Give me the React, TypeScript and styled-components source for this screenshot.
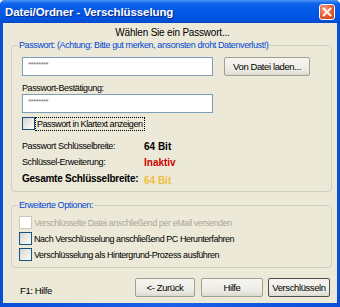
import React from "react";
import styled, { createGlobalStyle } from "styled-components";

const Global = createGlobalStyle`
  html, body { margin: 0; padding: 0; background: #ffffff; }
  body {
    font-family: "Liberation Sans", Arial, sans-serif;
    font-size: 9px;
    letter-spacing: -0.4px;
    color: #000;
  }
  * { box-sizing: border-box; }
`;

const Window = styled.div`
  width: 340px;
  height: 307px;
  display: flex;
  flex-direction: column;
  background: linear-gradient(90deg, #0a4fd9 0%, #1a5fe6 50%, #0a4fd9 100%);
  padding: 0 3px 4px 3px;
  border-radius: 5px 5px 0 0;
  overflow: hidden;
`;

const TitleBar = styled.div`
  height: 23px;
  flex: none;
  margin: 0 -3px;
  padding: 0 5px 0 5px;
  display: flex;
  align-items: center;
  justify-content: space-between;
  background: linear-gradient(180deg, #4a94f8 0%, #0f62ea 16%, #0058e6 50%, #0053df 85%, #0a48c8 100%);
`;

const Title = styled.span`
  color: #ffffff;
  font-weight: bold;
  font-size: 11.5px;
  letter-spacing: -0.1px;
  text-shadow: 1px 1px 0 #0a2a86;
`;

const CloseButton = styled.div`
  width: 16px;
  height: 16px;
  border: 1px solid #ffffff;
  border-radius: 3px;
  background: radial-gradient(circle at 35% 30%, #f2a083 0%, #e05a32 55%, #c43c16 100%);
  display: flex;
  align-items: center;
  justify-content: center;
  margin-top: 1px;
`;

const Body = styled.div`
  flex: 1;
  background: #ece9d8;
  display: flex;
  flex-direction: column;
  padding: 0 5px 0 8px;
`;

const Heading = styled.div`
  text-align: center;
  font-size: 10px;
  letter-spacing: -0.2px;
  height: 12px;
  line-height: 12px;
  margin-top: 4px;
  margin-left: 2px;
`;

const Group = styled.fieldset<{ $gap: number }>`
  margin: ${(p) => p.$gap}px 0 0 0;
  padding: 0 0 5px 10px;
  border: 1px solid #d0d0bf;
  border-radius: 4px;
  display: flex;
  flex-direction: column;
  min-width: 0;
`;

const Legend = styled.legend`
  color: #0046d5;
  padding: 0 1px;
  margin-left: -4px;
  line-height: 12px;
  height: 12px;
`;

const Row = styled.div`
  display: flex;
  align-items: center;
  gap: 11px;
  margin-top: 6px;
`;

const TextBox = styled.div`
  width: 191px;
  height: 19px;
  flex: none;
  border: 1px solid #7f9db9;
  background: #ffffff;
  color: #7a7a7a;
  font-size: 8px;
  line-height: 14px;
  padding-left: 5px;
  letter-spacing: -0.6px;
`;

const Label = styled.div`
  margin-top: 6px;
  height: 12px;
  line-height: 12px;
`;

const Button = styled.div<{ $w: number; $default?: boolean }>`
  width: ${(p) => p.$w}px;
  height: 19px;
  flex: none;
  border: 1px solid ${(p) => (p.$default ? "#4e4e4e" : "#a09f96")};
  border-radius: 2px;
  background: linear-gradient(180deg, #f6f5f0 0%, #ecebe4 70%, #dcdacf 100%);
  display: flex;
  align-items: center;
  justify-content: center;
  color: #000;
  font-size: 9.5px;
`;

const CheckRow = styled.div<{ $disabled?: boolean }>`
  display: flex;
  align-items: center;
  height: 13px;
  white-space: nowrap;
  color: ${(p) => (p.$disabled ? "#aca899" : "#000")};
`;

const Box = styled.span<{ $disabled?: boolean }>`
  width: 13px;
  height: 13px;
  flex: none;
  border: 1px solid ${(p) => (p.$disabled ? "#cac8bb" : "#1c5180")};
  background: ${(p) =>
    p.$disabled ? "#ffffff" : "linear-gradient(135deg, #d6d6d0 0%, #eeede8 60%, #ffffff 100%)"};
`;

const CheckText = styled.span<{ $focus?: boolean }>`
  margin-left: 1px;
  padding: 0 1px;
  line-height: 12px;
  font-size: 9px;
  letter-spacing: -0.45px;
  outline: ${(p) => (p.$focus ? "1px dotted #000" : "none")};
`;

const Stats = styled.div`
  display: grid;
  grid-template-columns: 122px auto;
  grid-auto-rows: 16px;
  align-items: center;
  margin-top: 8px;
  white-space: nowrap;
`;

const StatValue = styled.span<{ $color: string; $drop?: boolean }>`
  font-weight: bold;
  font-size: 10px;
  letter-spacing: 0;
  color: ${(p) => p.$color};
  margin-top: ${(p) => (p.$drop ? 4 : 0)}px;
`;

const BoldLabel = styled.span`
  font-weight: bold;
  font-size: 10px;
  letter-spacing: -0.25px;
`;

const Options = styled.div`
  display: flex;
  flex-direction: column;
  gap: 3px;
  padding-top: 5px;
  padding-bottom: 1px;
  margin-left: -3px;
`;

const Footer = styled.div`
  display: flex;
  align-items: center;
  margin-top: 10px;
  padding-left: 9px;
  padding-right: 2px;
`;

const Hint = styled.span`
  margin-top: 5px;
  flex: 1;
  font-size: 9.5px;
`;

const Buttons = styled.div`
  display: flex;
  gap: 5px;
`;

export default function App() {
  return (
    <>
      <Global />
      <Window>
        <TitleBar>
          <Title>Datei/Ordner - Verschlüsselung</Title>
          <CloseButton>
            <svg width="10" height="10" viewBox="0 0 10 10">
              <path d="M1.5 1.5 L8.5 8.5 M8.5 1.5 L1.5 8.5" stroke="#fff" strokeWidth="1.8" strokeLinecap="square" />
            </svg>
          </CloseButton>
        </TitleBar>
        <Body>
          <Heading>Wählen Sie ein Passwort...</Heading>
          <Group $gap={0}>
            <Legend>Passwort: (Achtung: Bitte gut merken, ansonsten droht Datenverlust!)</Legend>
            <Row>
              <TextBox>********</TextBox>
              <Button $w={86}>Von Datei laden...</Button>
            </Row>
            <Label>Passwort-Bestätigung:</Label>
            <TextBox>********</TextBox>
            <CheckRow style={{ marginTop: 4 }}>
              <Box />
              <CheckText $focus>Passwort in Klartext anzeigen</CheckText>
            </CheckRow>
            <Stats>
              <span>Passwort Schlüsselbreite:</span>
              <StatValue $color="#000000">64 Bit</StatValue>
              <span>Schlüssel-Erweiterung:</span>
              <StatValue $color="#d40000">Inaktiv</StatValue>
              <BoldLabel>Gesamte Schlüsselbreite:</BoldLabel>
              <StatValue $color="#f0c040" $drop>64 Bit</StatValue>
            </Stats>
          </Group>
          <Group $gap={7}>
            <Legend>Erweiterte Optionen:</Legend>
            <Options>
              <CheckRow $disabled>
                <Box $disabled />
                <CheckText>Verschlüsselte Datei anschließend per eMail versenden</CheckText>
              </CheckRow>
              <CheckRow>
                <Box />
                <CheckText>Nach Verschlüsselung anschließend PC Herunterfahren</CheckText>
              </CheckRow>
              <CheckRow>
                <Box />
                <CheckText>Verschlüsselung als Hintergrund-Prozess ausführen</CheckText>
              </CheckRow>
            </Options>
          </Group>
          <Footer>
            <Hint>F1: Hilfe</Hint>
            <Buttons>
              <Button $w={60} style={{ marginRight: 1 }}>&lt;- Zurück</Button>
              <Button $w={62}>Hilfe</Button>
              <Button $w={62} $default>Verschlüsseln</Button>
            </Buttons>
          </Footer>
        </Body>
      </Window>
    </>
  );
}
